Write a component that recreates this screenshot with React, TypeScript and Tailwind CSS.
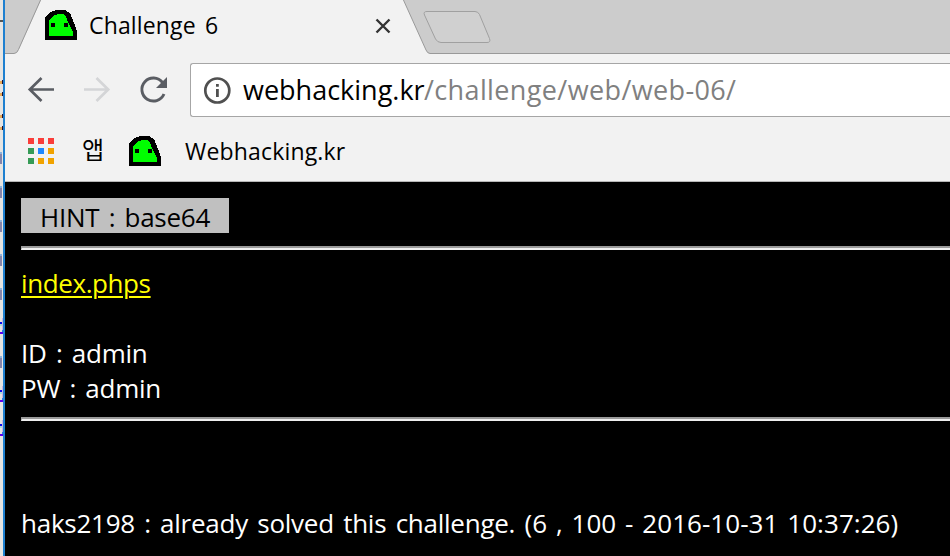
import React from "react";

const ui = "font-['Open_Sans','Noto_Sans_CJK_KR',sans-serif] whitespace-pre";

function Ghost() {
  return (
    <svg width="32" height="30" viewBox="0 0 32 30" shapeRendering="crispEdges" className="block shrink-0">
      <path d="M0 30V8L2 5L6 2L11 0H20L25 3L27 8L30 15L32 21V30Z" fill="#000" />
      <path d="M4 26V11L6 8L10 5L14 4H18L21 7L23 12L26 18L28 22V26Z" fill="#00ff00" />
      <path d="M6 13h4v4H6zM19 13h4v4h-4z" fill="#000" />
    </svg>
  );
}

const codeMarks = [80, 92, 114, 126];
const blockMarks = [152, 186, 220, 254, 288, 356];
const linkMarks = [322, 390, 424];

function WindowBehind() {
  return (
    <svg width="3" height="556" shapeRendering="crispEdges" className="block shrink-0 bg-[#e6e5e3]">
      <path d="M0 20h3v2H0z" fill="#555" />
      {codeMarks.map((y) => (
        <g key={y}>
          <path d={`M0 ${y + 1}h2v3H0z`} fill="#e8aa58" />
          <path d={`M2 ${y}h1v4H2z`} fill="#201030" />
        </g>
      ))}
      {blockMarks.map((y) => (
        <g key={y}>
          <path d={`M0 ${y}h2v2H0z`} fill="#8fb4dc" />
          <path d={`M0 ${y + 2}h2v10H0z`} fill="#8585ab" />
        </g>
      ))}
      {linkMarks.map((y) => (
        <g key={y}>
          <path d={`M2 ${y - 4}h1v14H2z`} fill="#c9b2e0" />
          <path d={`M0 ${y}h2v2H0z`} fill="#0a0af0" />
          <path d={`M0 ${y + 2}h2v2H0z`} fill="#a9e0dc" />
          <path d={`M2 ${y + 8}h1v2H2z`} fill="#2f7de8" />
          <path d={`M0 ${y + 10}h3v2H0z`} fill="#5a00f0" />
        </g>
      ))}
    </svg>
  );
}

function TabStrip() {
  return (
    <div className="relative h-[54px] shrink-0 bg-[#f2f2f2]">
      <svg width="945" height="54" className="absolute left-0 top-0">
        <path d="M0 0H36L13.500 50Q12 53.500 9 53.500H0Z" fill="#cccccc" />
        <path d="M36 -1L13.500 49.500Q12 53.500 9 53.500H0" fill="none" stroke="#999" />
        <path d="M398 -1L421 50Q422.500 53.500 425 53.500H946V-1Z" fill="#cccccc" stroke="#999" />
        <path d="M422 11.500H470Q473 11.500 474.500 14.500L484.500 38.500Q486 42.500 482 42.500H436Q432.500 42.500 430.500 39L419.500 15Q418 11.500 422 11.500Z" fill="#d0d0d0" stroke="#a0a0a0" />
      </svg>
      <div className="relative flex h-[54px] items-start pl-[40px]">
        <div className="pt-[10px]"><Ghost /></div>
        <span className={`${ui} ml-[12px] mt-[9px] w-[270px] text-[23px] leading-[32px] tracking-[0.15px] [word-spacing:3px] text-black`}>Challenge 6</span>
        <svg width="18" height="18" className="ml-[15px] mt-[17px]"><path d="M2.500 2.500L15.500 15.500M15.500 2.500L2.500 15.500" stroke="#333" strokeWidth="2.400" /></svg>
      </div>
    </div>
  );
}

function Toolbar() {
  return (
    <div className="flex h-[73px] shrink-0 items-start bg-[#f2f2f2] pl-[22px] pt-[9px]">
      <svg width="144" height="54" fill="none" className="shrink-0">
        <path d="M14.500 15L2.800 26.500L14.500 38M2.800 26.500H27" stroke="#5a5d63" strokeWidth="2.700" />
        <path d="M69.500 15L81.200 26.500L69.500 38M81.200 26.500H57" stroke="#d4d5d7" strokeWidth="2.700" />
        <path d="M135.500 19.500A11.500 11.500 0 1 0 137 31" stroke="#5a5d63" strokeWidth="2.900" />
        <path d="M140 14V25H129Z" fill="#5a5d63" />
      </svg>
      <div className="ml-[19px] flex h-[54px] grow items-start rounded-l-[3px] border border-r-0 border-[#a6a6a6] bg-white pl-[12px]">
        <svg width="28" height="28" fill="none" className="mt-[13px] shrink-0">
          <circle cx="14.300" cy="13.500" r="12" stroke="#505050" strokeWidth="2.700" />
          <path d="M13 7h2.800v2.800h-2.800zM13 12h2.800v8h-2.800z" fill="#505050" />
        </svg>
        <span className={`${ui} ml-[12px] mt-[7px] text-[27px] leading-[37px] text-black`}>
          <span className="inline-block w-[181px]">webhacking.kr</span><span className="tracking-[0.38px] text-[#808080]">/challenge/web/web-06/</span>
        </span>
      </div>
    </div>
  );
}

const appColors = ["bg-[#fa3e3a]", "bg-[#fa3e3a]", "bg-[#fa3e3a]", "bg-[#359b56]", "bg-[#1e88ff]", "bg-[#f1a300]", "bg-[#359b56]", "bg-[#f1a300]", "bg-[#f1a300]"];

function Bookmarks() {
  return (
    <div className="flex h-[55px] shrink-0 items-start border-b border-[#b6b6b6] bg-[#f2f2f2] pl-[23px]">
      <div className="mt-[11px] grid grid-cols-3 gap-[4px]">
        {appColors.map((c, i) => <div key={i} className={`h-[6px] w-[6px] ${c}`} />)}
      </div>
      <span className="ml-[28px] mt-[5px] w-[35px] font-['Noto_Sans_CJK_KR',sans-serif] text-[24px] leading-[34px]">앱</span>
      <div className="ml-[12px] mt-[9px]"><Ghost /></div>
      <span className={`${ui} ml-[24px] mt-[8px] text-[23px] leading-[32px] tracking-[0.17px]`}>Webhacking.kr</span>
    </div>
  );
}

function Rule() {
  return <div className="h-[4px] border-l border-t-2 border-b-2 border-t-[#9a9a9a] border-l-[#9a9a9a] border-b-[#eeeeee]" />;
}

export default function App() {
  return (
    <div className="flex h-[556px] w-[950px] overflow-hidden">
      <WindowBehind />
      <div className="w-[2px] shrink-0 bg-[#1e80d0]" />
      <div className="flex w-[945px] flex-col">
        <TabStrip />
        <Toolbar />
        <Bookmarks />
        <main className={`${ui} flex grow flex-col bg-black pl-[16px] pt-[16px] text-[26px] leading-[35px] tracking-[-0.25px] [word-spacing:2.8px] text-white`}>
          <div className="h-[35px] w-[208px] bg-[#c0c0c0] pl-[19px] pt-[2px] text-black">HINT : base64</div>
          <div className="h-[13px]" />
          <Rule />
          <div className="h-[16px]" />
          <a className="self-start tracking-[-0.4px] text-[#ffff00] underline decoration-2 underline-offset-[3px]">index.phps</a>
          <div className="h-[35px]" />
          <span className="self-start">ID : admin</span>
          <span className="self-start">PW : admin</span>
          <div className="h-[11px]" />
          <Rule />
          <div className="h-[85px]" />
          <span className="self-start">
            haks2198 : already solved this challenge. <span className="tracking-[0.05px] [word-spacing:2px]">(6 , 100 - 2016-10-31 10:37:26)</span>
          </span>
        </main>
      </div>
    </div>
  );
}
